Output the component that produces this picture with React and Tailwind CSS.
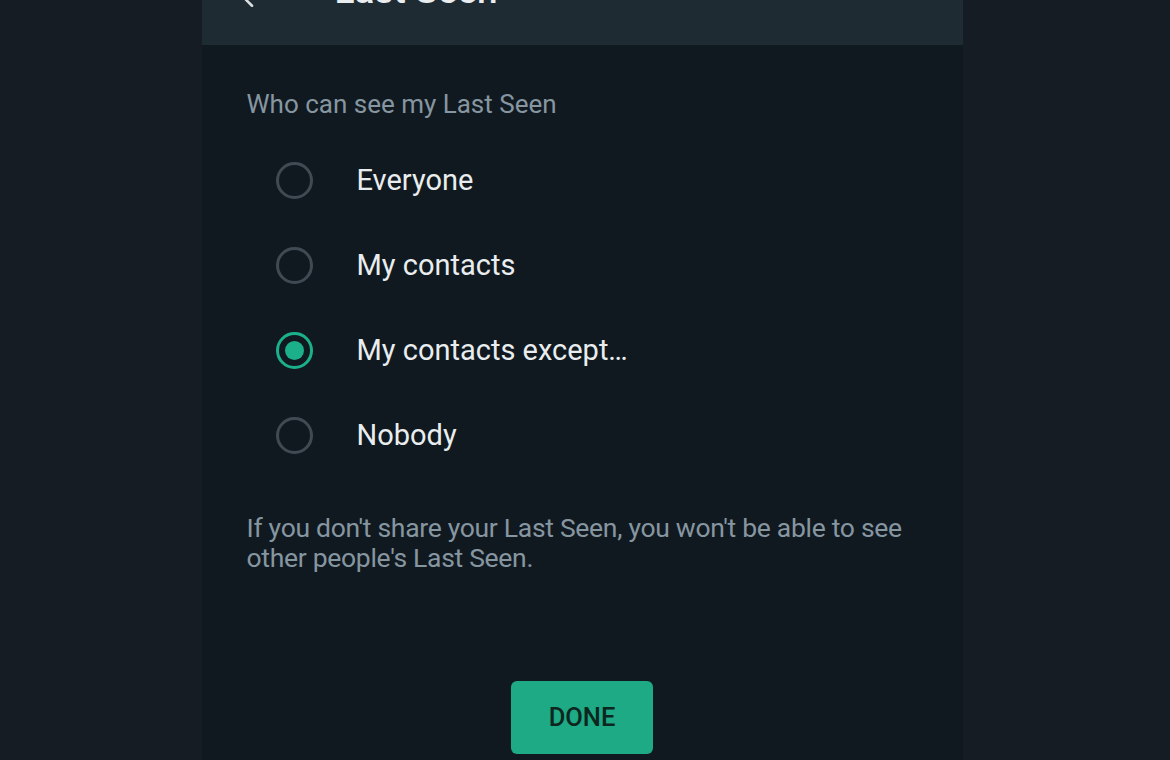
import React from "react";

const options = ["Everyone", "My contacts", "My contacts except…", "Nobody"];

export default function App() {
  const selected = 2;
  return (
    <div className="w-[1170px] h-[760px] overflow-hidden bg-[#161c23] flex justify-center" style={{ fontFamily: "Roboto, 'Noto Sans', sans-serif" }}>
      <div className="w-[761px] h-full bg-[#111920] ml-[-6px] flex flex-col">
        <div className="h-[45px] bg-[#1f2b33] overflow-hidden flex items-start shrink-0">
          <div className="flex items-center mt-[-34px] h-[48px]">
            <svg width="28" height="28" viewBox="0 0 24 24" className="ml-[36px] mt-[14px] text-[#d9dee0]">
              <path d="M20 12H5M12 4.5L4.5 12L12 19.5" fill="none" stroke="currentColor" strokeWidth="2.2" strokeLinecap="round" strokeLinejoin="round" />
            </svg>
            <span className="ml-[69px] text-[37px] font-medium text-[#e9edef] leading-none">Last Seen</span>
          </div>
        </div>
        <div className="pl-[45px] pt-[42px]">
          <div className="text-[26px] text-[#8696a0] leading-[34px]">Who can see my Last Seen</div>
          <div className="mt-[17px] flex flex-col">
            {options.map((o, i) => (
              <div key={o} className="h-[85px] flex items-center">
                <div className={`ml-[29px] w-[37px] h-[37px] rounded-full border-[3px] flex items-center justify-center ${i === selected ? "border-[#1bb08a]" : "border-[#3f4a52]"}`}>
                  {i === selected && <div className="w-[19px] h-[19px] rounded-full bg-[#1bb08a]" />}
                </div>
                <span className="ml-[44px] text-[29px] text-[#e9edef] leading-none">{o}</span>
              </div>
            ))}
          </div>
          <div className="mt-[35px] text-[26.5px] text-[#8696a0] leading-[30px] tracking-[-0.3px] w-[680px]">
            If you don't share your Last Seen, you won't be able to see other people's Last Seen.
          </div>
        </div>
        <div className="flex-1 flex items-end justify-center pb-[6px]">
          <button className="w-[142px] h-[73px] rounded-[6px] bg-[#1daa85] text-[#0d2620] text-[25.5px] font-medium">DONE</button>
        </div>
      </div>
    </div>
  );
}
